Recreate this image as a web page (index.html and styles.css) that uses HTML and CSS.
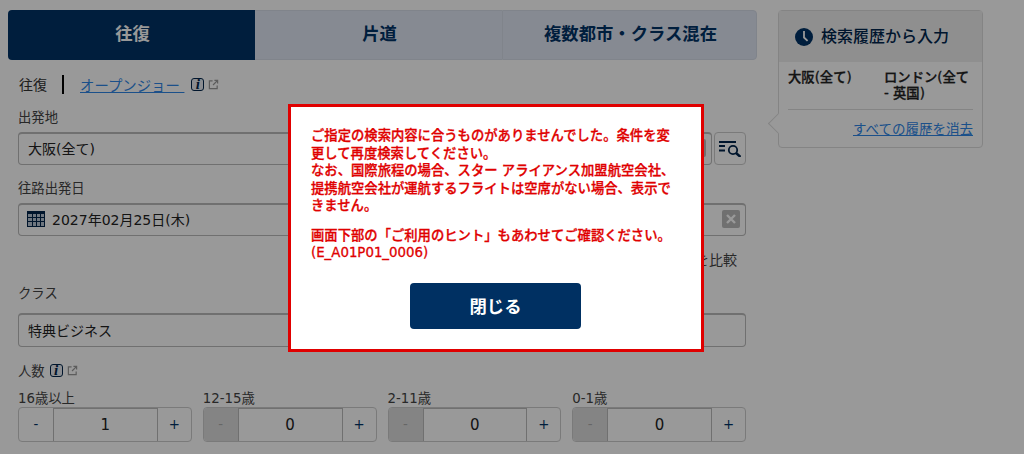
FILE: index.html
```html
<!DOCTYPE html>
<html lang="ja">
<head>
    <meta charset="UTF-8">
    <meta name="viewport" content="width=device-width, initial-scale=1.0">
    <title>フライト検索</title>
    <link rel="stylesheet" href="styles.css">
</head>
<body>
    <div class="page">
        <main class="main">
            <div class="tabs">
                <div class="tab active">往復</div>
                <div class="tab">片道</div>
                <div class="tab">複数都市・クラス混在</div>
            </div>

            <form class="form">
                <div class="trip-row">
                    <span>往復</span>
                    <span class="sep"></span>
                    <a class="link link-open" href="#">オープンジョー&nbsp;</a>
                    <span class="info"><i>i</i></span>
                    <svg class="ext" viewBox="0 0 12 12"><path d="M5 2H1.5v8.5H10V7M7 1.5h3.5V5M10.5 1.5L5.5 6.5" fill="none" stroke="currentColor" stroke-width="1.3"/></svg>
                </div>

                <div class="label label-first">出発地</div>
                <div class="place-row">
                    <div class="input">大阪(全て)</div>
                    <div class="input place-to">
                        <span class="clear">
                            <svg viewBox="0 0 10 10" width="10" height="10"><path d="M1 1l8 8M9 1l-8 8" stroke="#fff" stroke-width="2.4"/></svg>
                        </span>
                    </div>
                    <button type="button" class="search-btn">
                        <svg viewBox="0 0 22 16" width="22" height="16"><path d="M0 1h17M0 5h6M0 9.5h6" stroke="#00244a" stroke-width="1.8" fill="none"/><circle cx="14" cy="9" r="4.2" stroke="#00244a" stroke-width="1.8" fill="none"/><path d="M17 12l4.5 4" stroke="#00244a" stroke-width="2.4" fill="none"/></svg>
                    </button>
                </div>

                <div class="label label-date">往路出発日</div>
                <div class="input date-input">
                    <svg class="cal" viewBox="0 0 18 16" width="18" height="16"><path d="M0 0h18v16H0z" fill="#00244a"/><path d="M1 3h4v3H1zM6 3h3v3H6zM10 3h3v3h-3zM14 3h3v3h-3zM1 7h4v3H1zM6 7h3v3H6zM10 7h3v3h-3zM14 7h3v3h-3zM1 11h4v4H1zM6 11h3v4H6zM10 11h3v4h-3zM14 11h3v4h-3z" fill="#b9c6d6"/></svg>
                    <span>2027年02月25日(木)</span>
                    <span class="clear">
                        <svg viewBox="0 0 10 10" width="10" height="10"><path d="M1 1l8 8M9 1l-8 8" stroke="#fff" stroke-width="2.4"/></svg>
                    </span>
                </div>

                <div class="compare">前後3日を比較</div>

                <div class="label label-class">クラス</div>
                <div class="input class-input">特典ビジネス</div>

                <div class="people-head">
                    <span>人数</span>
                    <span class="info"><i>i</i></span>
                    <svg class="ext" viewBox="0 0 12 12"><path d="M5 2H1.5v8.5H10V7M7 1.5h3.5V5M10.5 1.5L5.5 6.5" fill="none" stroke="currentColor" stroke-width="1.3"/></svg>
                </div>

                <div class="people">
                    <div class="person">
                        <div class="age">16歳以上</div>
                        <div class="stepper">
                            <span class="step">-</span>
                            <span class="count">1</span>
                            <span class="step">+</span>
                        </div>
                    </div>
                    <div class="person">
                        <div class="age">12-15歳</div>
                        <div class="stepper">
                            <span class="step off">-</span>
                            <span class="count">0</span>
                            <span class="step">+</span>
                        </div>
                    </div>
                    <div class="person">
                        <div class="age">2-11歳</div>
                        <div class="stepper">
                            <span class="step off">-</span>
                            <span class="count">0</span>
                            <span class="step">+</span>
                        </div>
                    </div>
                    <div class="person">
                        <div class="age">0-1歳</div>
                        <div class="stepper">
                            <span class="step off">-</span>
                            <span class="count">0</span>
                            <span class="step">+</span>
                        </div>
                    </div>
                </div>
            </form>
        </main>

        <aside class="history">
            <div class="history-head">
                <svg viewBox="0 0 18 18" width="18" height="18"><circle cx="9" cy="9" r="9" fill="#003366"/><path d="M9 3v6.5l3.6 3.4" stroke="#fff" stroke-width="1.8" fill="none"/></svg>
                <span class="history-title">検索履歴から入力</span>
            </div>
            <div class="history-body">
                <div class="history-item">
                    <span>大阪(全て)</span>
                    <span>ロンドン(全て - 英国)</span>
                </div>
                <div class="history-foot"><a class="link" href="#">すべての履歴を消去</a></div>
            </div>
        </aside>
    </div>

    <div class="overlay">
        <div class="modal">
            <p class="msg">ご指定の検索内容に合うものがありませんでした。条件を変更して再度検索してください。<br>なお、国際旅程の場合、スター アライアンス加盟航空会社、提携航空会社が運航するフライトは空席がない場合、表示できません。</p>
            <p class="msg">画面下部の「ご利用のヒント」もあわせてご確認ください。<br>(E_A01P01_0006)</p>
            <button type="button" class="close-btn">閉じる</button>
        </div>
    </div>
</body>
</html>
```

FILE: styles.css
```css
html, body {
    margin: 0;
    height: 100%;
    overflow: hidden;
}
body {
    font-family: "DejaVu Sans", "Noto Sans CJK JP", sans-serif;
    font-size: 14px;
    color: #333;
    background: #fff;
}
.page {
    display: flex;
    gap: 21px;
    padding: 10px 8px 0;
}
.main {
    width: 749px;
    flex: none;
}
.tabs {
    display: grid;
    grid-template-columns: 247px 247px 255px;
    height: 50px;
}
.tab {
    display: flex;
    align-items: center;
    justify-content: center;
    padding: 0 0 6px 2px;
    box-sizing: border-box;
    background: #e0e6f4;
    color: #003366;
    font-size: 17.33px;
    font-weight: bold;
    border-top: 1px solid #d5dce8;
    border-bottom: 1px solid #d5dce8;
}
.tab:last-child {
    border-radius: 0 4px 4px 0;
    border-left: 1px solid #d5dce8;
    border-right: 1px solid #d5dce8;
}
.tab.active {
    background: #003366;
    color: #fff;
    border: 0;
    border-radius: 4px 0 0 4px;
}
.form {
    padding: 0 11px 0 10px;
}
.trip-row {
    display: flex;
    align-items: center;
    height: 20px;
    margin-top: 14px;
    padding-left: 1px;
}
.sep {
    width: 2px;
    height: 19px;
    background: #000;
    margin: 0 16px 0 15px;
}
.link {
    color: #2e86e6;
    text-decoration: underline;
}
.link-open {
    font-size: 14.4px;
}
.info {
    display: inline-flex;
    align-items: center;
    justify-content: center;
    width: 11px;
    height: 11px;
    margin-left: 7px;
    border: 1.5px solid #00244a;
    border-radius: 3px;
    background: #e8ecf2;
    color: #00244a;
    font: italic bold 15px "Liberation Serif", serif;
}
.ext {
    width: 11px;
    height: 11px;
    margin-left: 4px;
    color: #999;
}
.label {
    padding-top: 2px;
    font-size: 13.33px;
    line-height: 16px;
    color: #444;
}
.label-first {
    margin-top: 14px;
}
.label-date {
    margin-top: 14px;
}
.label-class {
    margin-top: 14px;
}
.input {
    display: flex;
    align-items: center;
    box-sizing: border-box;
    height: 33px;
    padding: 0 5px 2px 9px;
    border: 1px solid #bbb;
    border-top-width: 2px;
    border-radius: 4px;
    background: #fff;
    color: #222;
}
.place-row {
    display: flex;
    gap: 2px;
    margin-top: 6px;
}
.place-row .input {
    flex: 1;
}
.search-btn {
    display: flex;
    align-items: center;
    justify-content: center;
    width: 32px;
    height: 33px;
    padding: 0;
    border: 1px solid #ccc;
    border-radius: 4px;
    background: #fff;
}
.date-input {
    gap: 7px;
    margin-top: 6px;
    padding-left: 8px;
}
.clear {
    display: flex;
    align-items: center;
    justify-content: center;
    width: 18px;
    height: 18px;
    margin-left: auto;
    border-radius: 2px;
    background: #bbb;
}
.compare {
    margin-top: 14px;
    padding-right: 9px;
    text-align: right;
    line-height: 20px;
    color: #444;
}
.class-input {
    height: 34px;
    margin-top: 11px;
}
.people-head {
    display: flex;
    align-items: center;
    height: 20px;
    margin-top: 13px;
    font-size: 13.33px;
    color: #444;
}
.people-head .info {
    margin-left: 5px;
}
.people {
    display: grid;
    grid-template-columns: repeat(4, 1fr);
    gap: 11px;
    margin-top: 10px;
}
.age {
    padding-top: 2px;
    font-size: 13.33px;
    line-height: 14px;
    color: #444;
}
.stepper {
    display: flex;
    box-sizing: border-box;
    height: 35px;
    margin-top: 1px;
    border: 1px solid #ccc;
    border-radius: 4px;
    background: #fff;
    overflow: hidden;
}
.step {
    display: flex;
    align-items: center;
    justify-content: center;
    width: 34px;
    flex: none;
    color: #003366;
    font-size: 13.33px;
}
.step:last-child {
    width: 33px;
}
.step.off {
    background: #ddd;
    color: #aaa;
}
.count {
    flex: 1;
    display: flex;
    align-items: center;
    justify-content: center;
    border-left: 1px solid #bbb;
    border-right: 1px solid #bbb;
    border-top: 1px solid #bbb;
    color: #222;
    font-size: 15px;
}
.history {
    box-sizing: border-box;
    position: relative;
    width: 205px;
    height: 138px;
    border: 1px solid #ddd;
    border-radius: 4px;
    background: #fff;
}
.history::before {
    content: "";
    position: absolute;
    left: -8px;
    top: 105px;
    width: 15px;
    height: 15px;
    background: #fff;
    border-left: 1px solid #ddd;
    border-bottom: 1px solid #ddd;
    box-sizing: border-box;
    transform: rotate(45deg);
}
.history-head {
    display: flex;
    align-items: center;
    gap: 8px;
    height: 51px;
    padding-left: 16px;
    background: #eee;
    color: #00264d;
    font-size: 16px;
    font-weight: 500;
}
.history-title {
    margin-bottom: 3px;
}
.history-body {
    padding: 8px 9px 0;
    font-size: 13.33px;
}
.history-item {
    display: grid;
    grid-template-columns: 96px 1fr;
    padding-bottom: 7px;
    border-bottom: 1px solid #ddd;
    font-weight: 500;
    -webkit-text-stroke: 0.3px #222;
    line-height: 16px;
    color: #222;
}
.history-foot {
    margin-top: 8px;
    text-align: right;
    font-size: 13.5px;
}
.overlay {
    position: fixed;
    inset: 0;
    background: rgba(0, 0, 0, 0.4);
}
.modal {
    position: absolute;
    left: 288px;
    top: 104px;
    box-sizing: border-box;
    width: 416px;
    height: 248px;
    padding: 20px 21px 0 20px;
    border: 3px solid #e00000;
    background: #fff;
}
.msg {
    margin: 0 0 12px;
    color: #e00000;
    font-size: 13.33px;
    font-weight: 500;
    -webkit-text-stroke: 0.3px #e00000;
    line-height: 17.5px;
}
.close-btn {
    display: block;
    width: 171px;
    height: 46px;
    margin: 21px auto 0;
    border: 0;
    border-radius: 4px;
    background: #003062;
    color: #fff;
    font: bold 17.33px "DejaVu Sans", "Noto Sans CJK JP", sans-serif;
}
```
